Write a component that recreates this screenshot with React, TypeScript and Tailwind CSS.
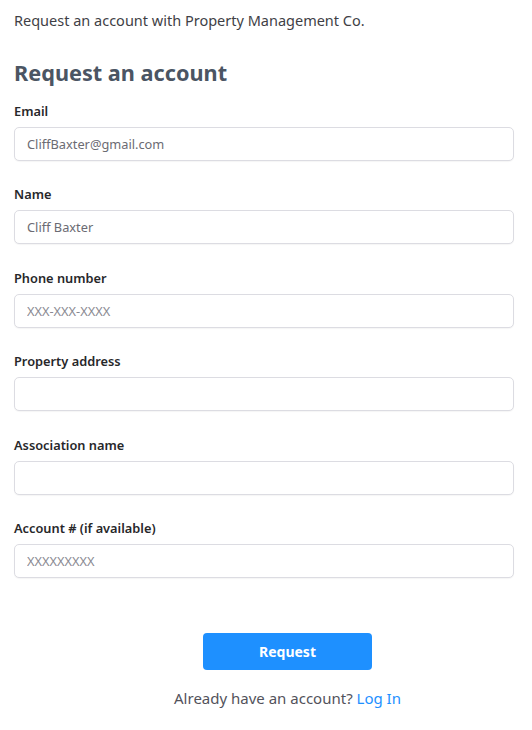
import React from "react";

const fields = [
  { label: "Email", value: "CliffBaxter@gmail.com", placeholder: "" },
  { label: "Name", value: "Cliff Baxter", placeholder: "" },
  { label: "Phone number", value: "", placeholder: "XXX-XXX-XXXX" },
  { label: "Property address", value: "", placeholder: "" },
  { label: "Association name", value: "", placeholder: "" },
  { label: "Account # (if available)", value: "", placeholder: "XXXXXXXXX" },
];

export default function App() {
  return (
    <div
      className="w-[532px] min-h-[730px] bg-white px-[14px] pt-[10px]"
      style={{ fontFamily: "'Noto Sans', 'Lato', sans-serif" }}
    >
      <p className="text-[14.5px] leading-[20px] text-[#3f3f46]">
        Request an account with Property Management Co.
      </p>
      <h1 className="mt-[29px] text-[21.7px] leading-[28px] font-bold text-[#4b5563]">
        Request an account
      </h1>
      <div className="mt-[16px] flex flex-col gap-[25.4px]">
        {fields.map((f) => (
          <div key={f.label} className="flex flex-col">
            <label className="text-[12.8px] leading-[16px] font-semibold text-[#27272a]">
              {f.label}
            </label>
            <input
              readOnly
              defaultValue={f.value}
              placeholder={f.placeholder}
              className="mt-[8px] h-[34px] w-[500px] rounded-[5px] border border-[#dcdce2] bg-white px-[12px] text-[12.8px] text-[#6b6b73] placeholder:text-[#8a8a92] outline-none shadow-[0_1px_1px_rgba(0,0,0,0.04)]"
            />
          </div>
        ))}
      </div>
      <div className="mt-[55px] flex flex-col items-center pl-[43px]">
        <button className="h-[37px] w-[169px] rounded-[4px] bg-[#1e90ff] text-[14px] font-bold text-white">
          Request
        </button>
        <p className="mt-[18px] text-[15px] leading-[20px] text-[#52525b]">
          Already have an account? <span className="text-[#1e90ff]">Log In</span>
        </p>
      </div>
    </div>
  );
}
